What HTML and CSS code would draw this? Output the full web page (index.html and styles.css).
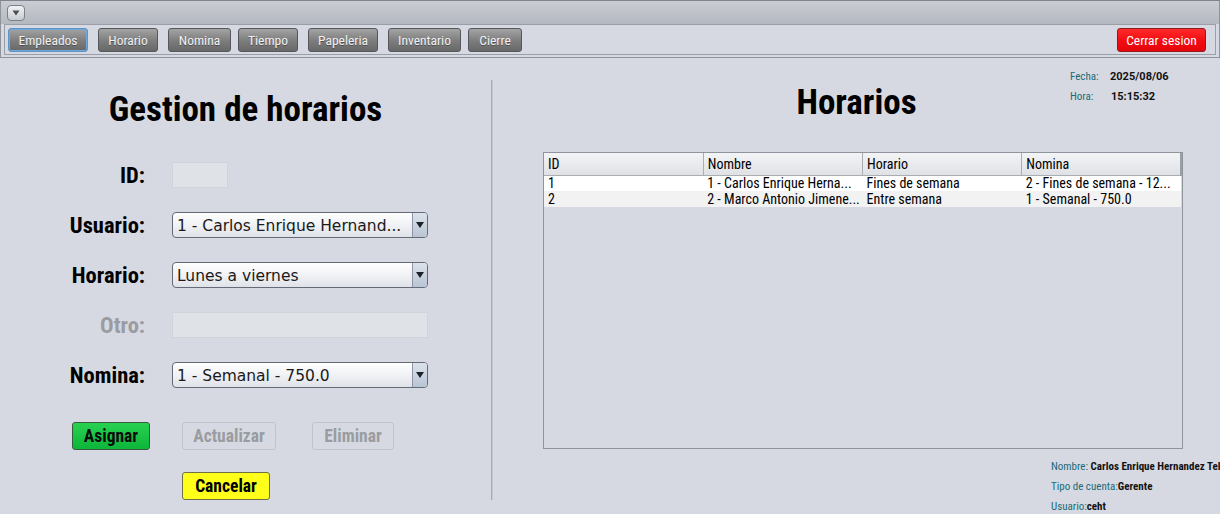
FILE: index.html
```html
<!DOCTYPE html>
<html lang="es">
<head>
<meta charset="utf-8">
<title>Gestion de horarios</title>
<link rel="stylesheet" href="styles.css">
</head>
<body>
<div class="app">
  <header class="topbar">
    <div class="strip">
      <button class="toggle" aria-label="menu"><svg width="8" height="6" viewBox="0 0 8 6"><path d="M0.5 0.5 L7.5 0.5 L4 5.5 Z" fill="#4a4f57"/></svg></button>
    </div>
    <nav class="toolbar">
      <button class="tb focused b1">Empleados</button>
      <button class="tb b2">Horario</button>
      <button class="tb b3">Nomina</button>
      <button class="tb b4">Tiempo</button>
      <button class="tb b5">Papeleria</button>
      <button class="tb b6">Inventario</button>
      <button class="tb b7">Cierre</button>
      <span class="spacer"></span>
      <button class="tb logout">Cerrar sesion</button>
    </nav>
  </header>

  <main class="main">
    <section class="left">
      <h1 class="title">Gestion de horarios</h1>
      <div class="form">
        <label class="lbl">ID:</label>
        <div class="idbox"></div>

        <label class="lbl">Usuario:</label>
        <div class="combo"><span class="val">1 - Carlos Enrique Hernand...</span><span class="arrow"><svg width="8" height="6" viewBox="0 0 8 6"><path d="M0 0 L8 0 L4 6 Z" fill="#1d2026"/></svg></span></div>

        <label class="lbl">Horario:</label>
        <div class="combo"><span class="val">Lunes a viernes</span><span class="arrow"><svg width="8" height="6" viewBox="0 0 8 6"><path d="M0 0 L8 0 L4 6 Z" fill="#1d2026"/></svg></span></div>

        <label class="lbl disabled">Otro:</label>
        <div class="textbox"></div>

        <label class="lbl">Nomina:</label>
        <div class="combo"><span class="val">1 - Semanal - 750.0</span><span class="arrow"><svg width="8" height="6" viewBox="0 0 8 6"><path d="M0 0 L8 0 L4 6 Z" fill="#1d2026"/></svg></span></div>
      </div>
      <div class="actions">
        <button class="btn green">Asignar</button>
        <button class="btn off w-act">Actualizar</button>
        <button class="btn off w-del">Eliminar</button>
      </div>
      <div class="actions second">
        <button class="btn yellow">Cancelar</button>
      </div>
    </section>

    <div class="divider"></div>

    <section class="right">
      <div class="head">
        <h2 class="title2">Horarios</h2>
        <dl class="datetime">
          <dt>Fecha:</dt><dd>2025/08/06</dd>
          <dt>Hora:</dt><dd class="hora">15:15:32</dd>
        </dl>
      </div>
      <div class="tablewrap">
        <table class="grid">
          <thead>
            <tr><th>ID</th><th>Nombre</th><th>Horario</th><th>Nomina</th></tr>
          </thead>
          <tbody>
            <tr><td>1</td><td>1 - Carlos Enrique Herna...</td><td>Fines de semana</td><td>2 - Fines de semana - 12...</td></tr>
            <tr class="alt"><td>2</td><td>2 - Marco Antonio Jimene...</td><td>Entre semana</td><td>1 - Semanal - 750.0</td></tr>
          </tbody>
        </table>
      </div>
      <div class="userinfo">
        <div class="urow"><span class="k">Nombre:</span> <span class="v">Carlos Enrique Hernandez Tel</span></div>
        <div class="urow"><span class="k">Tipo de cuenta:</span><span class="v">Gerente</span></div>
        <div class="urow"><span class="k">Usuario:</span><span class="v">ceht</span></div>
      </div>
    </section>
  </main>
</div>
</body>
</html>
```

FILE: styles.css
```css
* { box-sizing: border-box; }
html, body { margin: 0; padding: 0; }
body {
  width: 1220px;
  height: 514px;
  overflow: hidden;
  background: #d6d9e1;
  font-family: "Roboto Condensed", "DejaVu Sans Condensed", sans-serif;
  color: #000;
}
button { font-family: inherit; cursor: default; }

.app { width: 1220px; height: 514px; }

/* ---------- top bar ---------- */
.topbar {
  height: 58px;
  border: 1px solid #8e939b;
  border-top-color: #7f848c;
  background: #d6d9e1;
}
.strip {
  height: 23px;
  background: linear-gradient(#cacdd3, #b4b8c0);
  padding: 4px 0 0 6px;
}
.toggle {
  width: 18px;
  height: 16px;
  padding: 0;
  border: 1px solid #7c8089;
  border-radius: 4px;
  background: linear-gradient(#f1f2f4, #c8cbd1);
  display: flex;
  align-items: center;
  justify-content: center;
}
.toolbar {
  margin: 0 3px;
  height: 31px;
  border: 1px solid #9a9ea7;
  display: flex;
  align-items: center;
  padding: 0 9px 0 3px;
}
.spacer { flex: 1; }
.tb {
  height: 24px;
  padding: 0;
  border: 1px solid #55585d;
  border-radius: 3px;
  background: linear-gradient(#a3a3a3, #7c7c7c 55%, #686868);
  color: #f0f1f3;
  font-size: 13.5px;
  font-weight: normal;
  text-shadow: 0 1px 0 rgba(0,0,0,.35);
  white-space: nowrap;
}
.b1 { width: 80px; }
.b2 { width: 60px; margin-left: 10px; }
.b3 { width: 63px; margin-left: 10px; }
.b4 { width: 60px; margin-left: 7px; }
.b5 { width: 70px; margin-left: 10px; }
.b6 { width: 73px; margin-left: 10px; }
.b7 { width: 54px; margin-left: 7px; }
.tb.focused {
  border: 1px solid #5e94c8;
  box-shadow: inset 0 0 0 1px #6fa7db;
}
.logout {
  width: 89px;
  border-color: #8d1b1f;
  background: linear-gradient(#ff2a2a, #f20c10 55%, #e4060a);
  color: #fff;
  text-shadow: none;
}

/* ---------- main ---------- */
.main { display: flex; height: 456px; }

.left { width: 491px; }
.title {
  margin: 32px 0 0;
  text-align: center;
  font-size: 35px;
  line-height: 40px;
  font-weight: bold;
}
.form {
  display: grid;
  grid-template-columns: 145px 256px;
  column-gap: 27px;
  row-gap: 24px;
  margin-top: 32px;
  align-items: center;
}
.lbl {
  text-align: right;
  font-size: 22.5px;
  font-weight: bold;
  line-height: 26px;
}
.lbl.disabled { color: #9a9ca1; }
.idbox {
  width: 56px;
  height: 26px;
  background: #dfe2e7;
  border: 1px solid #d0d3d9;
}
.textbox {
  height: 26px;
  background: #dfe2e7;
  border: 1px solid #d0d3d9;
}
.combo {
  height: 26px;
  display: flex;
  border: 1px solid #656b76;
  border-radius: 4px;
  background: linear-gradient(#ffffff, #f1f2f5 50%, #dfe2e8);
  overflow: hidden;
}
.combo .val {
  flex: 1;
  padding: 3px 0 0 4px;
  font-family: "DejaVu Sans", "Liberation Sans", sans-serif;
  font-size: 15.5px;
  line-height: 20px;
  color: #1a1a1a;
  white-space: nowrap;
}
.combo .arrow {
  width: 15px;
  border-left: 1px solid #8f96a3;
  background: linear-gradient(#dbe2ec, #b9c5d4);
  display: flex;
  align-items: center;
  justify-content: center;
}

.actions {
  display: flex;
  margin: 34px 0 0 72px;
  height: 28px;
}
.actions.second { margin: 22px 0 0 182px; }
.btn {
  height: 28px;
  border-radius: 3px;
  font-size: 17.5px;
  font-weight: bold;
  padding: 0;
}
.green {
  width: 78px;
  border: 1px solid #3a5a3f;
  background: linear-gradient(#29d151, #0cb63a);
  color: #0a0a0a;
}
.off {
  border: 1px solid #c0c3c9;
  background: #d6d9e1;
  color: #9a9ca1;
}
.w-act { width: 94px; margin-left: 32px; }
.w-del { width: 82px; margin-left: 36px; }
.yellow {
  width: 88px;
  border: 1px solid #6f6f4a;
  background: #ffff1a;
  color: #000;
}

.divider {
  width: 2px;
  height: 420px;
  margin-top: 22px;
  background: #a8abb3;
  border-right: 1px solid #c4c7ce;
  flex: none;
}

/* ---------- right ---------- */
.right { flex: 1; min-width: 0; }
.head {
  display: grid;
  height: 94px;
}
.head > * { grid-area: 1 / 1; }
.title2 {
  margin: 25px 0 0;
  text-align: center;
  font-size: 35px;
  line-height: 40px;
  font-weight: bold;
}
.datetime {
  justify-self: start;
  align-self: start;
  margin: 11px 0 0 577px;
  display: grid;
  grid-template-columns: 40px auto;
  row-gap: 4px;
  font-size: 11px;
  line-height: 16px;
}
.datetime dt { color: #1b6a78; margin: 0; }
.datetime dd {
  margin: 0;
  color: #111;
  font-family: "Roboto", "DejaVu Sans", sans-serif;
  font-weight: bold;
}
.datetime dd.hora { padding-left: 1px; }

.tablewrap {
  margin-left: 50px;
  width: 640px;
  height: 297px;
  border: 1px solid #8f939b;
  background: #d6d9e1;
}
.grid {
  width: 638px;
  border-collapse: collapse;
  table-layout: fixed;
  font-size: 14px;
}
.grid th {
  height: 22px;
  text-align: left;
  font-weight: normal;
  padding: 0 4px;
  background: linear-gradient(#f3f4f6, #dfe1e5);
  border-right: 1px solid #a9adb4;
  border-bottom: 1px solid #a9adb4;
}
.grid th:last-child { border-right: 2px solid #9a9ea5; }
.grid td {
  height: 16px;
  padding: 0 4px;
  line-height: 15px;
  white-space: nowrap;
  overflow: hidden;
  background: #fff;
}
.grid tr.alt td { background: #f2f2f2; }

.userinfo {
  margin: 8px 0 0 558px;
  font-size: 11px;
  line-height: 20px;
  white-space: nowrap;
}
.urow { overflow: hidden; }
.userinfo .k { color: #1b6a78; }
.userinfo .v { color: #111; font-weight: bold; }
```
